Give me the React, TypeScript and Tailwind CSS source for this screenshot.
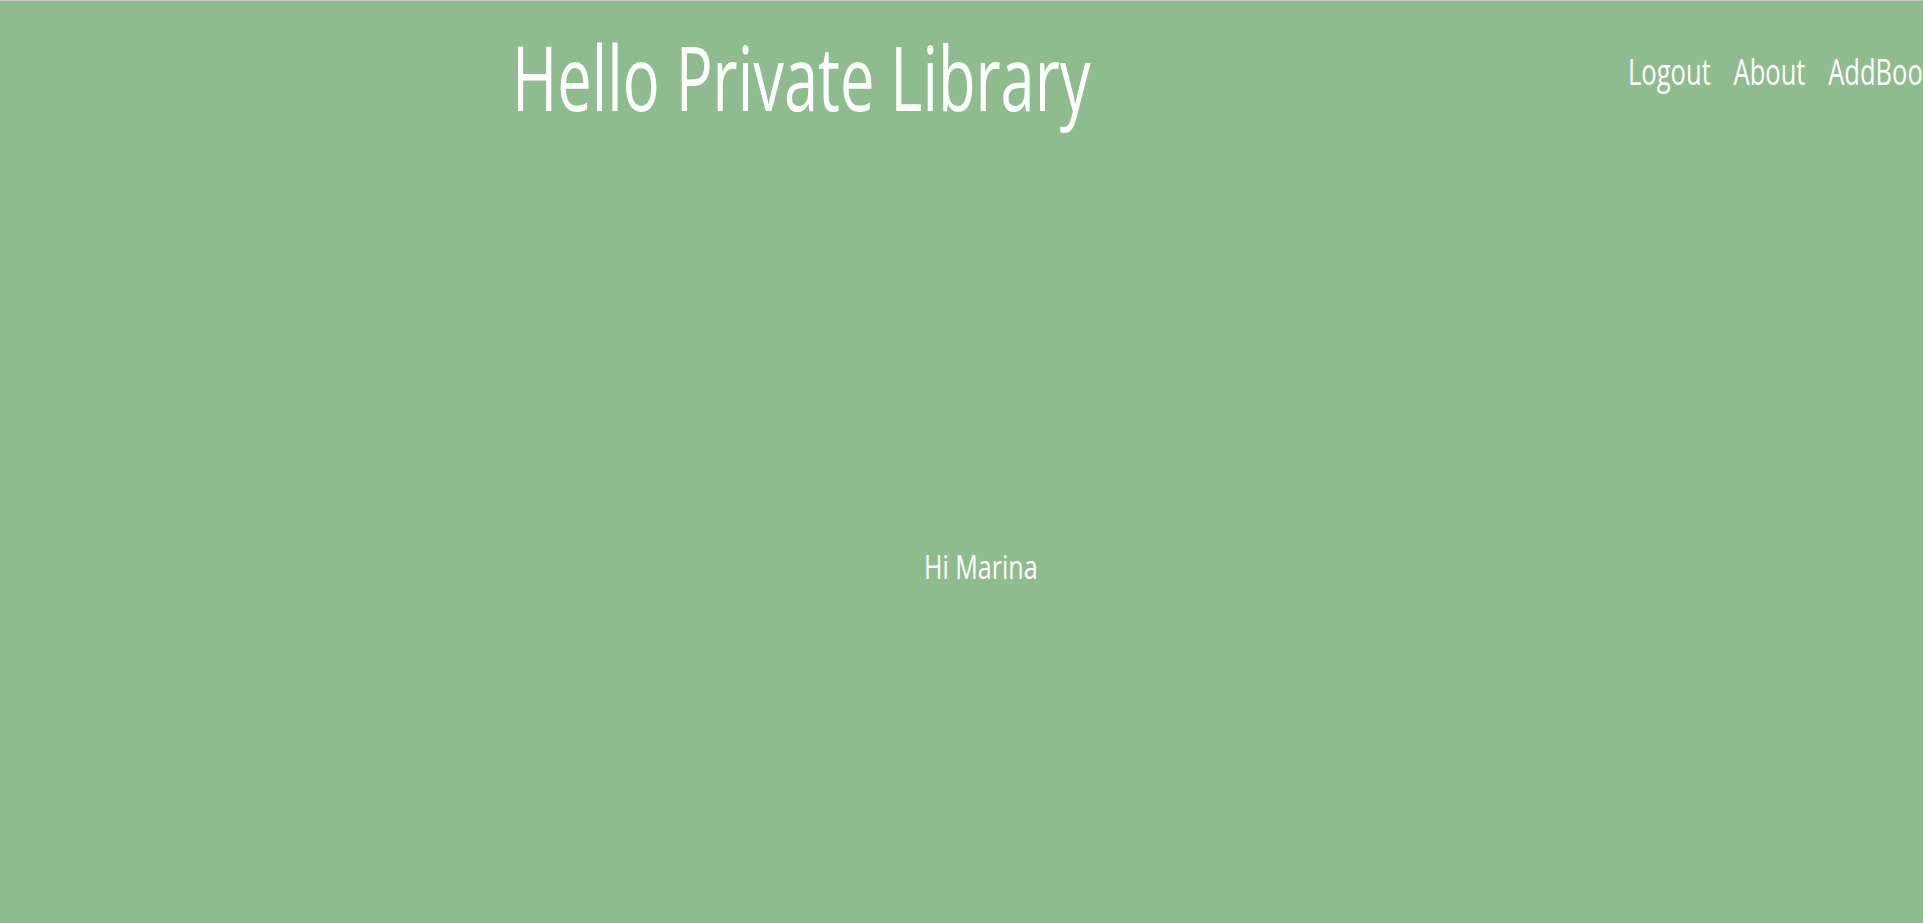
import React from 'react';

const links = ['Logout', 'About', 'AddBook'];

const App: React.FC = () => {
    return (
        <div className="h-[923px] w-full overflow-hidden bg-[#8fbc8f] border-t border-[#c4c4c4] text-white" style={{ fontFamily: '"Open Sans", sans-serif' }}>
            <header className="flex items-start h-[140px]">
                <div className="w-[1628px] shrink-0 pl-[512px] pt-[28px]">
                    <h1 className="inline-block origin-left scale-x-[0.69] whitespace-nowrap text-[89px] leading-[96px]">Hello Private Library</h1>
                </div>
                <nav className="flex gap-[32px] origin-left scale-x-[0.71] pt-[49px] whitespace-nowrap">
                    {links.map(l => (
                        <a key={l} className="inline-block text-[36px] leading-[44px]">{l}</a>
                    ))}
                </nav>
            </header>
            <main className="flex justify-center pt-[406px] pl-[38px]">
                <p className="origin-center scale-x-[0.76] text-[33px] leading-[40px]">Hi Marina</p>
            </main>
        </div>
    );
};

export default App;
